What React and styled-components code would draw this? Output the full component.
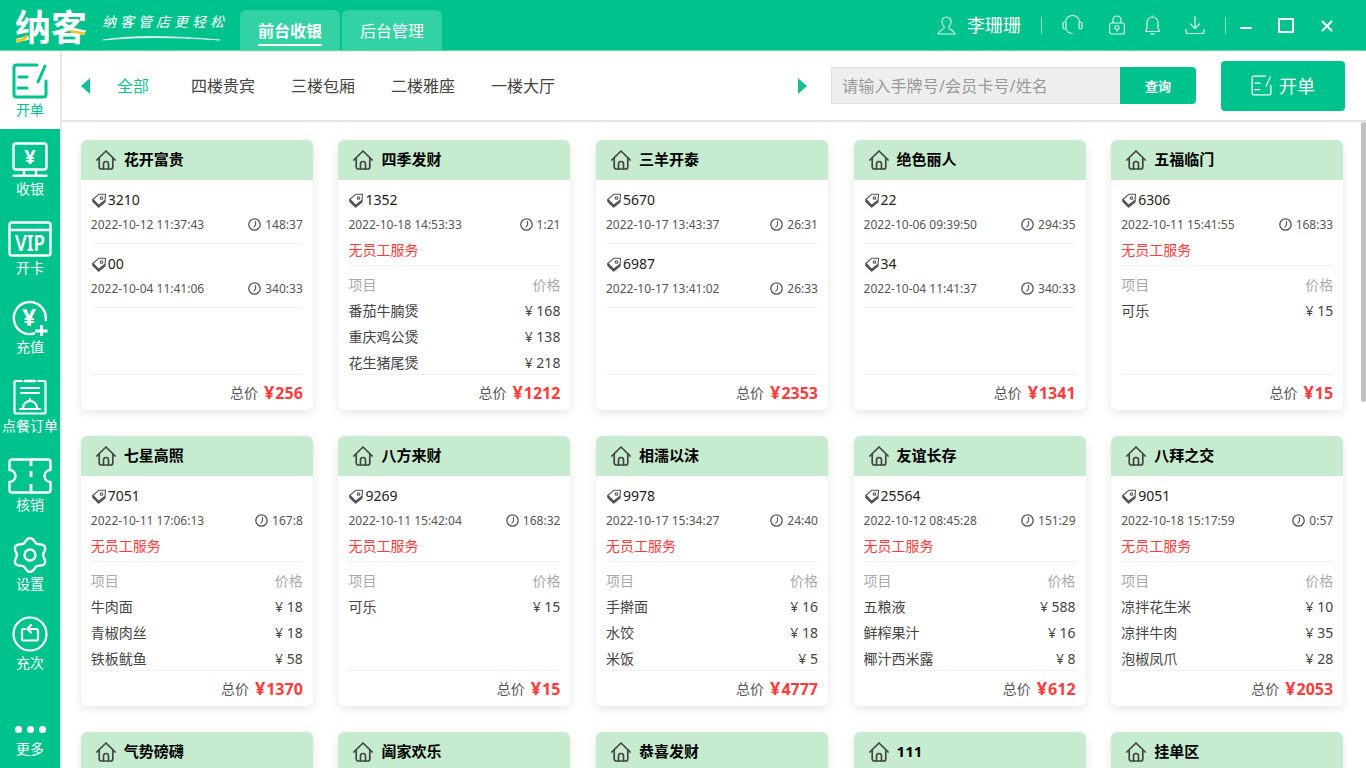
import React from "react";
import styled, { createGlobalStyle } from "styled-components";

const GREEN = "#00c28c";

const tables = [
  { name: "花开富贵", total: 256, tickets: [
    { no: "3210", time: "2022-10-12 11:37:43", used: "148:37" },
    { no: "00", time: "2022-10-04 11:41:06", used: "340:33" },
  ] },
  { name: "四季发财", total: 1212, noStaff: true, tickets: [{ no: "1352", time: "2022-10-18 14:53:33", used: "1:21" }],
    items: [["番茄牛腩煲", 168], ["重庆鸡公煲", 138], ["花生猪尾煲", 218]] },
  { name: "三羊开泰", total: 2353, tickets: [
    { no: "5670", time: "2022-10-17 13:43:37", used: "26:31" },
    { no: "6987", time: "2022-10-17 13:41:02", used: "26:33" },
  ] },
  { name: "绝色丽人", total: 1341, tickets: [
    { no: "22", time: "2022-10-06 09:39:50", used: "294:35" },
    { no: "34", time: "2022-10-04 11:41:37", used: "340:33" },
  ] },
  { name: "五福临门", total: 15, noStaff: true, tickets: [{ no: "6306", time: "2022-10-11 15:41:55", used: "168:33" }],
    items: [["可乐", 15]] },
  { name: "七星高照", total: 1370, noStaff: true, tickets: [{ no: "7051", time: "2022-10-11 17:06:13", used: "167:8" }],
    items: [["牛肉面", 18], ["青椒肉丝", 18], ["铁板鱿鱼", 58]] },
  { name: "八方来财", total: 15, noStaff: true, tickets: [{ no: "9269", time: "2022-10-11 15:42:04", used: "168:32" }],
    items: [["可乐", 15]] },
  { name: "相濡以沫", total: 4777, noStaff: true, tickets: [{ no: "9978", time: "2022-10-17 15:34:27", used: "24:40" }],
    items: [["手擀面", 16], ["水饺", 18], ["米饭", 5]] },
  { name: "友谊长存", total: 612, noStaff: true, tickets: [{ no: "25564", time: "2022-10-12 08:45:28", used: "151:29" }],
    items: [["五粮液", 588], ["鲜榨果汁", 16], ["椰汁西米露", 8]] },
  { name: "八拜之交", total: 2053, noStaff: true, tickets: [{ no: "9051", time: "2022-10-18 15:17:59", used: "0:57" }],
    items: [["凉拌花生米", 10], ["凉拌牛肉", 35], ["泡椒凤爪", 28]] },
  { name: "气势磅礴" },
  { name: "阖家欢乐" },
  { name: "恭喜发财" },
  { name: "111" },
  { name: "挂单区" },
];

const GlobalStyle = createGlobalStyle`
  html, body { margin: 0; height: 100%; overflow: hidden; }
  body { font-family: "Noto Sans", "Noto Sans CJK SC", sans-serif; background: #fff; }
  * { box-sizing: border-box; }
`;

const Page = styled.div`
  width: 1366px;
  height: 768px;
  display: flex;
  flex-direction: column;
  overflow: hidden;
`;

const Header = styled.header`
  height: 51px;
  flex: none;
  display: flex;
  background: ${GREEN};
  border-bottom: 1px solid #58dd95;
  color: #fff;
`;

const Brand = styled.div`
  width: 240px;
  flex: none;
  display: flex;
  align-items: center;
  padding-left: 15px;
`;

const Logo = styled.div`
  position: relative;
  width: 72px;
  font: 700 36px/40px "Noto Sans CJK SC", sans-serif;
  white-space: nowrap;
  svg { position: absolute; left: 0; top: 0; }
`;

const Slogan = styled.div`
  position: relative;
  margin-left: 15px;
  height: 34px;
  font: italic 14px/26px "Noto Sans CJK SC", serif;
  letter-spacing: 4px;
  white-space: nowrap;
  svg { position: absolute; left: 0; bottom: 0; }
`;

const HeadTabs = styled.nav`
  display: flex;
  gap: 2px;
  align-self: flex-end;
`;

const HeadTab = styled.div`
  width: 100px;
  height: 40px;
  display: flex;
  justify-content: center;
  align-items: center;
  background: #33d2a5;
  border-radius: 6px 6px 0 0;
  font-size: 16px;
  font-weight: ${(p) => (p.$active ? 700 : 400)};
  span {
    padding: 3px 0 1px;
    border-bottom: 2px solid ${(p) => (p.$active ? "#fff" : "transparent")};
    line-height: 24px;
    margin-top: 2px;
  }
`;

const HeadRight = styled.div`
  margin-left: auto;
  padding-right: 33px;
  display: flex;
  align-items: center;
`;

const HeadItem = styled.span`
  display: flex;
  margin-left: ${(p) => p.$gap}px;
  font-size: 18px;
  line-height: 24px;
  white-space: nowrap;
`;

const HeadSep = styled.i`
  width: 1px;
  height: 17px;
  background: #7fe0c5;
  margin-left: 20px;
`;

const Main = styled.div`
  flex: 1;
  min-height: 0;
  display: flex;
`;

const Sidebar = styled.aside`
  width: 62px;
  flex: none;
  display: flex;
  flex-direction: column;
  background: ${GREEN};
  border-right: 2px solid #e8e8e8;
`;

const SideItem = styled.div`
  height: 79px;
  flex: none;
  padding-top: 12px;
  display: flex;
  flex-direction: column;
  align-items: center;
  color: ${(p) => (p.$active ? GREEN : "#fff")};
  background: ${(p) => (p.$active ? "#fff" : "transparent")};
  border-bottom: ${(p) => (p.$active ? `1px solid ${GREEN}` : "0")};
  svg { flex: none; display: block; }
`;

const SideLabel = styled.span`
  margin-top: 1px;
  font-size: 14px;
  line-height: 20px;
  white-space: nowrap;
`;

const MoreItem = styled(SideItem)`
  margin-top: auto;
  height: 48px;
  padding-top: 0;
`;

const Dots = styled.div`
  height: 18px;
  display: flex;
  gap: 5px;
  align-items: center;
  i { width: 7px; height: 7px; border-radius: 50%; background: #fff; }
`;

const Workspace = styled.div`
  flex: 1;
  min-width: 0;
  display: flex;
  flex-direction: column;
`;

const Toolbar = styled.div`
  height: 71px;
  flex: none;
  display: flex;
  align-items: center;
  padding: 0 21px 0 19px;
  border-bottom: 2px solid #e4e4e4;
`;

const Arrow = styled.i`
  flex: none;
  width: 0;
  height: 0;
  border-top: 8px solid transparent;
  border-bottom: 8px solid transparent;
  ${(p) => (p.$right ? `border-left: 9px solid #14c092;` : `border-right: 9px solid #14c092;`)}
`;

const FloorTabs = styled.div`
  flex: 1;
  display: flex;
  gap: 36px;
  padding-left: 27px;
`;

const FloorTab = styled.span`
  font-size: 16px;
  line-height: 24px;
  color: ${(p) => (p.$active ? "#14c092" : "#444")};
  margin-right: ${(p) => (p.$active ? 6 : 0)}px;
`;

const Search = styled.div`
  margin-left: 24px;
  display: flex;
  height: 37px;
`;

const SearchInput = styled.input`
  width: 289px;
  padding: 0 10px;
  border: 1px solid #dedede;
  border-right: 0;
  outline: 0;
  background: #eee;
  font: 16px "Noto Sans", "Noto Sans CJK SC", sans-serif;
  letter-spacing: 0.15px;
  &::placeholder { color: #999; opacity: 1; }
`;

const SearchButton = styled.button`
  width: 76px;
  border: 0;
  padding: 0;
  border-radius: 0 4px 4px 0;
  background: ${GREEN};
  color: #fff;
  font: 700 13px "Noto Sans CJK SC", sans-serif;
`;

const OpenButton = styled.button`
  margin-left: 25px;
  width: 124px;
  height: 50px;
  border: 0;
  padding: 0 0 2px;
  border-radius: 4px;
  background: ${GREEN};
  color: #fff;
  display: flex;
  align-items: center;
  justify-content: center;
  gap: 7px;
  font: 18px "Noto Sans CJK SC", sans-serif;
  svg { margin-top: 2px; }
`;

const Content = styled.div`
  position: relative;
  flex: 1;
  min-height: 0;
  overflow: hidden;
  padding: 18px 0 0 18.8px;
`;

const ScrollThumb = styled.div`
  position: absolute;
  top: 0;
  right: 0;
  width: 5px;
  height: 280px;
  border-radius: 3px;
  background: #c1c1c1;
`;

const Grid = styled.div`
  display: grid;
  grid-template-columns: repeat(5, 232px);
  column-gap: 25.6px;
  row-gap: 26px;
`;

const Card = styled.article`
  height: 270px;
  display: flex;
  flex-direction: column;
  border-radius: 6px;
  background: #fff;
  box-shadow: 0 3px 10px rgba(0, 0, 0, 0.1);
`;

const CardHead = styled.div`
  height: 40px;
  flex: none;
  display: flex;
  align-items: center;
  gap: 8px;
  padding-left: 15px;
  border-radius: 6px 6px 0 0;
  background: #c6ebcf;
  color: #000;
  font-size: 15px;
  font-weight: 700;
  span { padding-bottom: 3px; }
`;

const CardBody = styled.div`
  flex: 1;
  min-height: 0;
  display: flex;
  flex-direction: column;
  padding: 0 10px;
`;

const CardList = styled.div`
  height: 194px;
  flex: none;
  overflow: hidden;
`;

const Ticket = styled.div`
  padding: 10px 0 ${(p) => (p.$noStaff ? 5 : 9)}px;
  border-bottom: 1px solid #f2f2f2;
`;

const TagRow = styled.div`
  height: 20px;
  display: flex;
  align-items: center;
  gap: 2px;
  padding-left: 1px;
  font-size: 14px;
  color: #222;
  span { padding-bottom: 2px; }
  svg { flex: none; }
`;

const TimeRow = styled.div`
  height: 20px;
  margin-top: 4px;
  display: flex;
  align-items: center;
  font-size: 12px;
  color: #555;
  white-space: nowrap;
`;

const Used = styled.span`
  margin-left: auto;
  display: flex;
  align-items: center;
  gap: 4px;
`;

const NoStaff = styled.div`
  margin-top: 6px;
  font-size: 14px;
  line-height: 20px;
  color: #ff3b3b;
`;

const ItemTable = styled.div`
  margin-top: 6px;
`;

const ItemRow = styled.div`
  height: 26px;
  padding-bottom: 2px;
  display: flex;
  justify-content: space-between;
  align-items: center;
  font-size: 14px;
  color: ${(p) => (p.$head ? "#aaa" : "#444")};
`;

const CardFoot = styled.div`
  flex: 1;
  display: flex;
  justify-content: flex-end;
  align-items: center;
  gap: 6px;
  padding-bottom: 2px;
  border-top: 1px solid #f2f2f2;
  font-size: 14px;
  color: #555;
`;

const TotalPrice = styled.b`
  font-size: 16px;
  color: #ff3b3b;
  i { font-style: normal; font-size: 18px; margin-right: 1px; }
`;

const stroke = { fill: "none", stroke: "currentColor", strokeLinecap: "round", strokeLinejoin: "round" };

const EditIcon = ({ size = 36, width = 3 }) => (
  <svg width={size} height={size} viewBox="0 0 36 36" {...stroke} strokeWidth={width}>
    <path d="M25 2H4.500A2.500 2.500 0 0 0 2 4.500V31.500A2.500 2.500 0 0 0 4.500 34H31.500A2.500 2.500 0 0 0 34 31.500V18" />
    <path d="M7 14H15M6 25H15M33 3L26 19" />
  </svg>
);

const HouseIcon = () => (
  <svg width="20" height="20" viewBox="0 0 20 20" fill="none" stroke="#444" strokeWidth="1.700" strokeLinejoin="round" strokeLinecap="round">
    <path d="M0.800 10L10 1L19.200 10" />
    <path d="M3.200 8V17A2 2 0 0 0 5.200 19H14.800A2 2 0 0 0 16.800 17V8" />
    <path d="M7.500 19V14A2.500 2.500 0 0 1 12.500 14V19" />
  </svg>
);

const TagIcon = () => (
  <svg width="14" height="15" viewBox="0 0 14 15" fill="none" stroke="#555" strokeWidth="1.100" strokeLinejoin="round">
    <path d="M0.800 6.500L7 1.200H13.500L13 7.500L6.500 12.500Z" />
    <path d="M0.800 6.500L6.500 12.500L13 7.500V9L6.500 14.200L0.800 8.500Z" fill="#555" />
    <circle cx="9.500" cy="5" r="1.300" />
  </svg>
);

const ClockIcon = () => (
  <svg width="13" height="13" viewBox="0 0 13 13" fill="none" stroke="#555" strokeWidth="1.300">
    <circle cx="6.500" cy="6.500" r="5.700" />
    <path d="M7.500 3V7L5.500 9.500" strokeWidth="1.100" />
  </svg>
);

// scalloped outline of the settings icon
const gearPath = Array.from({ length: 120 }, (_, i) => {
  const a = (i / 120) * Math.PI * 2;
  const r = 15 + 1.900 * Math.cos(6 * a);
  return `${i ? "L" : "M"}${(18 + r * Math.sin(a)).toFixed(2)} ${(18 - r * Math.cos(a)).toFixed(2)}`;
}).join("") + "Z";

const sideItems = [
  { label: "收银", icon: (
    <svg width="36" height="36" viewBox="0 0 36 36" {...stroke} strokeWidth="2.400">
      <rect x="1.500" y="1.500" width="33" height="26" rx="2.500" />
      <path d="M12 27.500V33M24 27.500V33M1.500 33.700H34.500" />
      <text x="18" y="21.500" fontSize="20" fontWeight="700" textAnchor="middle" fill="currentColor" stroke="none">¥</text>
    </svg>
  ) },
  { label: "开卡", icon: (
    <svg width="44" height="36" viewBox="0 0 44 36" {...stroke} strokeWidth="2.400">
      <rect x="1.500" y="1.500" width="41" height="33" rx="2.500" />
      <path d="M2 9H42" />
      <text x="22" y="29.500" fontSize="22" fontWeight="600" textAnchor="middle" textLength="30" lengthAdjust="spacingAndGlyphs" fontFamily="Noto Sans" fill="currentColor" stroke="none">VIP</text>
    </svg>
  ) },
  { label: "充值", icon: (
    <svg width="36" height="36" viewBox="0 0 36 36" {...stroke} strokeWidth="2.400">
      <path d="M22 33.500A16 16 0 1 1 33.700 20" />
      <path d="M23 31H35.500M29.500 25V36" strokeWidth="2.800" strokeLinecap="butt" />
      <text x="17" y="25.500" fontSize="24" fontWeight="700" textAnchor="middle" fill="currentColor" stroke="none">¥</text>
    </svg>
  ) },
  { label: "点餐订单", icon: (
    <svg width="36" height="36" viewBox="0 0 36 36" {...stroke} strokeWidth="2.200">
      <path d="M10 2H4A1.500 1.500 0 0 0 2.500 3.500V33A1.500 1.500 0 0 0 4 34.500H32A1.500 1.500 0 0 0 33.500 33V3.500A1.500 1.500 0 0 0 32 2H26" />
      <path d="M13 2H23" strokeWidth="2.600" />
      <path d="M9 9H27M9 14H27M8 30H28M11 29A7 7 0 0 1 25 29" />
      <path d="M18 20V22" />
    </svg>
  ) },
  { label: "核销", icon: (
    <svg width="44" height="36" viewBox="0 0 44 36" {...stroke} strokeWidth="2.400">
      <path d="M4 1.500H40A2.500 2.500 0 0 1 42.500 4V12A6 6 0 0 0 42.500 24V32A2.500 2.500 0 0 1 40 34.500H4A2.500 2.500 0 0 1 1.500 32V24A6 6 0 0 0 1.500 12V4A2.500 2.500 0 0 1 4 1.500Z" />
      <path d="M23 3V8M23 13V19M23 26V33" strokeWidth="2.800" strokeLinecap="butt" />
    </svg>
  ) },
  { label: "设置", icon: (
    <svg width="36" height="36" viewBox="0 0 36 36" {...stroke} strokeWidth="2.400">
      <path d={gearPath} />
      <circle cx="18" cy="18" r="5.500" />
    </svg>
  ) },
  { label: "充次", icon: (
    <svg width="36" height="36" viewBox="0 0 36 36" {...stroke} strokeWidth="2.200">
      <circle cx="18" cy="18" r="16.500" />
      <path d="M13 13H11.500A1.500 1.500 0 0 0 10 14.500V23A1.500 1.500 0 0 0 11.500 24.500H24.500A1.500 1.500 0 0 0 26 23V14.500A1.500 1.500 0 0 0 24.500 13H16" />
      <path d="M19 9L15.500 13L19 16.500" />
    </svg>
  ) },
];

const floors = ["全部", "四楼贵宾", "三楼包厢", "二楼雅座", "一楼大厅"];

function TableCard({ table }) {
  const { name, total, tickets = [], items, noStaff } = table;
  return (
    <Card>
      <CardHead><HouseIcon /><span>{name}</span></CardHead>
      <CardBody>
        <CardList>
          {tickets.map((t) => (
            <Ticket key={t.no} $noStaff={noStaff}>
              <TagRow><TagIcon /><span>{t.no}</span></TagRow>
              <TimeRow>
                {t.time}
                <Used><ClockIcon />{t.used}</Used>
              </TimeRow>
              {noStaff && <NoStaff>无员工服务</NoStaff>}
            </Ticket>
          ))}
          {items && (
            <ItemTable>
              <ItemRow $head><span>项目</span><span>价格</span></ItemRow>
              {items.map(([label, price]) => (
                <ItemRow key={label}><span>{label}</span><span>¥ {price}</span></ItemRow>
              ))}
            </ItemTable>
          )}
        </CardList>
        {total !== undefined && (
          <CardFoot>总价<TotalPrice><i>¥</i>{total}</TotalPrice></CardFoot>
        )}
      </CardBody>
    </Card>
  );
}

export default function App() {
  return (
    <Page>
      <GlobalStyle />
      <Header>
        <Brand>
          <Logo>
            纳客
            <svg width="72" height="40" viewBox="0 0 72 40" fill="none">
              <path d="M1 34Q7 35 12 29L13 32Q8 38 1 37Z" fill="#f6c324" />
              <path d="M55 25Q62 26 69 27L70 30Q62 28 56 28Z" fill="#f6c324" />
            </svg>
          </Logo>
          <Slogan>
            纳客管店更轻松
            <svg width="124" height="8" viewBox="0 0 124 8" fill="none">
              <path d="M1 6Q40 -1 118 6Q50 1 1 6Z" fill="#fff" stroke="#fff" strokeWidth="0.600" />
            </svg>
          </Slogan>
        </Brand>
        <HeadTabs>
          <HeadTab $active><span>前台收银</span></HeadTab>
          <HeadTab><span>后台管理</span></HeadTab>
        </HeadTabs>
        <HeadRight>
          <HeadItem $gap={0}>
            <svg width="19" height="19" viewBox="0 0 19 19" fill="none" stroke="#d5f5ec" strokeWidth="1.100">
              <path d="M9.500 1A4.500 4.500 0 0 1 14 6C14 9 12 10.500 11.500 11.500C11.500 13 17 14 18 18H1C2 14 7.500 13 7.500 11.500C7 10.500 5 9 5 6A4.500 4.500 0 0 1 9.500 1Z" />
            </svg>
          </HeadItem>
          <HeadItem $gap={11}>李珊珊</HeadItem>
          <HeadSep />
          <HeadItem $gap={20}>
            <svg width="21" height="20" viewBox="0 0 21 20" fill="none" stroke="#d5f5ec" strokeWidth="1.200">
              <path d="M3.500 7A7 6.500 0 0 1 17.500 7M3.500 14Q6 18.500 11 18.500" />
              <rect x="1" y="7" width="3" height="7" rx="1.500" />
              <rect x="17" y="7" width="3" height="7" rx="1.500" />
            </svg>
          </HeadItem>
          <HeadItem $gap={26}>
            <svg width="16" height="20" viewBox="0 0 16 20" fill="none" stroke="#d5f5ec" strokeWidth="1.200">
              <path d="M4 8V5A4 4 0 0 1 12 5V8" />
              <rect x="0.600" y="8" width="14.800" height="11" rx="2" />
              <circle cx="8" cy="12.500" r="2" />
              <path d="M8 14.500V16.500" />
            </svg>
          </HeadItem>
          <HeadItem $gap={20}>
            <svg width="15" height="20" viewBox="0 0 15 20" fill="none" stroke="#d5f5ec" strokeWidth="1.200">
              <path d="M7.500 2A5.500 5.500 0 0 1 13 7.500V13L14.500 16.500H0.500L2 13V7.500A5.500 5.500 0 0 1 7.500 2Z" />
              <path d="M5.500 18.800H9.500M6.500 1H8.500" />
            </svg>
          </HeadItem>
          <HeadItem $gap={25}>
            <svg width="20" height="20" viewBox="0 0 20 20" fill="none" stroke="#d5f5ec" strokeWidth="1.200">
              <path d="M10 1V13M5 8.500L10 13.500L15 8.500" />
              <path d="M1 14V16.500A2 2 0 0 0 3 18.500H17A2 2 0 0 0 19 16.500V14" />
            </svg>
          </HeadItem>
          <HeadSep />
          <HeadItem $gap={14}>
            <svg width="12" height="12" viewBox="0 0 12 12" fill="#fff"><rect y="8" width="12" height="2" /></svg>
          </HeadItem>
          <HeadItem $gap={26}>
            <svg width="16" height="15" viewBox="0 0 16 15" fill="none" stroke="#fff" strokeWidth="2"><rect x="1" y="1" width="14" height="13" /></svg>
          </HeadItem>
          <HeadItem $gap={27}>
            <svg width="12" height="14" viewBox="0 0 12 14" fill="none" stroke="#fff" strokeWidth="2"><path d="M1 3L11 13M11 3L1 13" /></svg>
          </HeadItem>
        </HeadRight>
      </Header>
      <Main>
        <Sidebar>
          <SideItem $active>
            <EditIcon />
            <SideLabel>开单</SideLabel>
          </SideItem>
          {sideItems.map((item) => (
            <SideItem key={item.label}>
              {item.icon}
              <SideLabel>{item.label}</SideLabel>
            </SideItem>
          ))}
          <MoreItem>
            <Dots><i /><i /><i /></Dots>
            <SideLabel>更多</SideLabel>
          </MoreItem>
        </Sidebar>
        <Workspace>
          <Toolbar>
            <Arrow />
            <FloorTabs>
              {floors.map((f, i) => (
                <FloorTab key={f} $active={i === 0}>{f}</FloorTab>
              ))}
            </FloorTabs>
            <Arrow $right />
            <Search>
              <SearchInput placeholder="请输入手牌号/会员卡号/姓名" />
              <SearchButton>查询</SearchButton>
            </Search>
            <OpenButton>
              <EditIcon size={21} width={2.200} />
              开单
            </OpenButton>
          </Toolbar>
          <Content>
            <Grid>
              {tables.map((t) => <TableCard key={t.name} table={t} />)}
            </Grid>
            <ScrollThumb />
          </Content>
        </Workspace>
      </Main>
    </Page>
  );
}
